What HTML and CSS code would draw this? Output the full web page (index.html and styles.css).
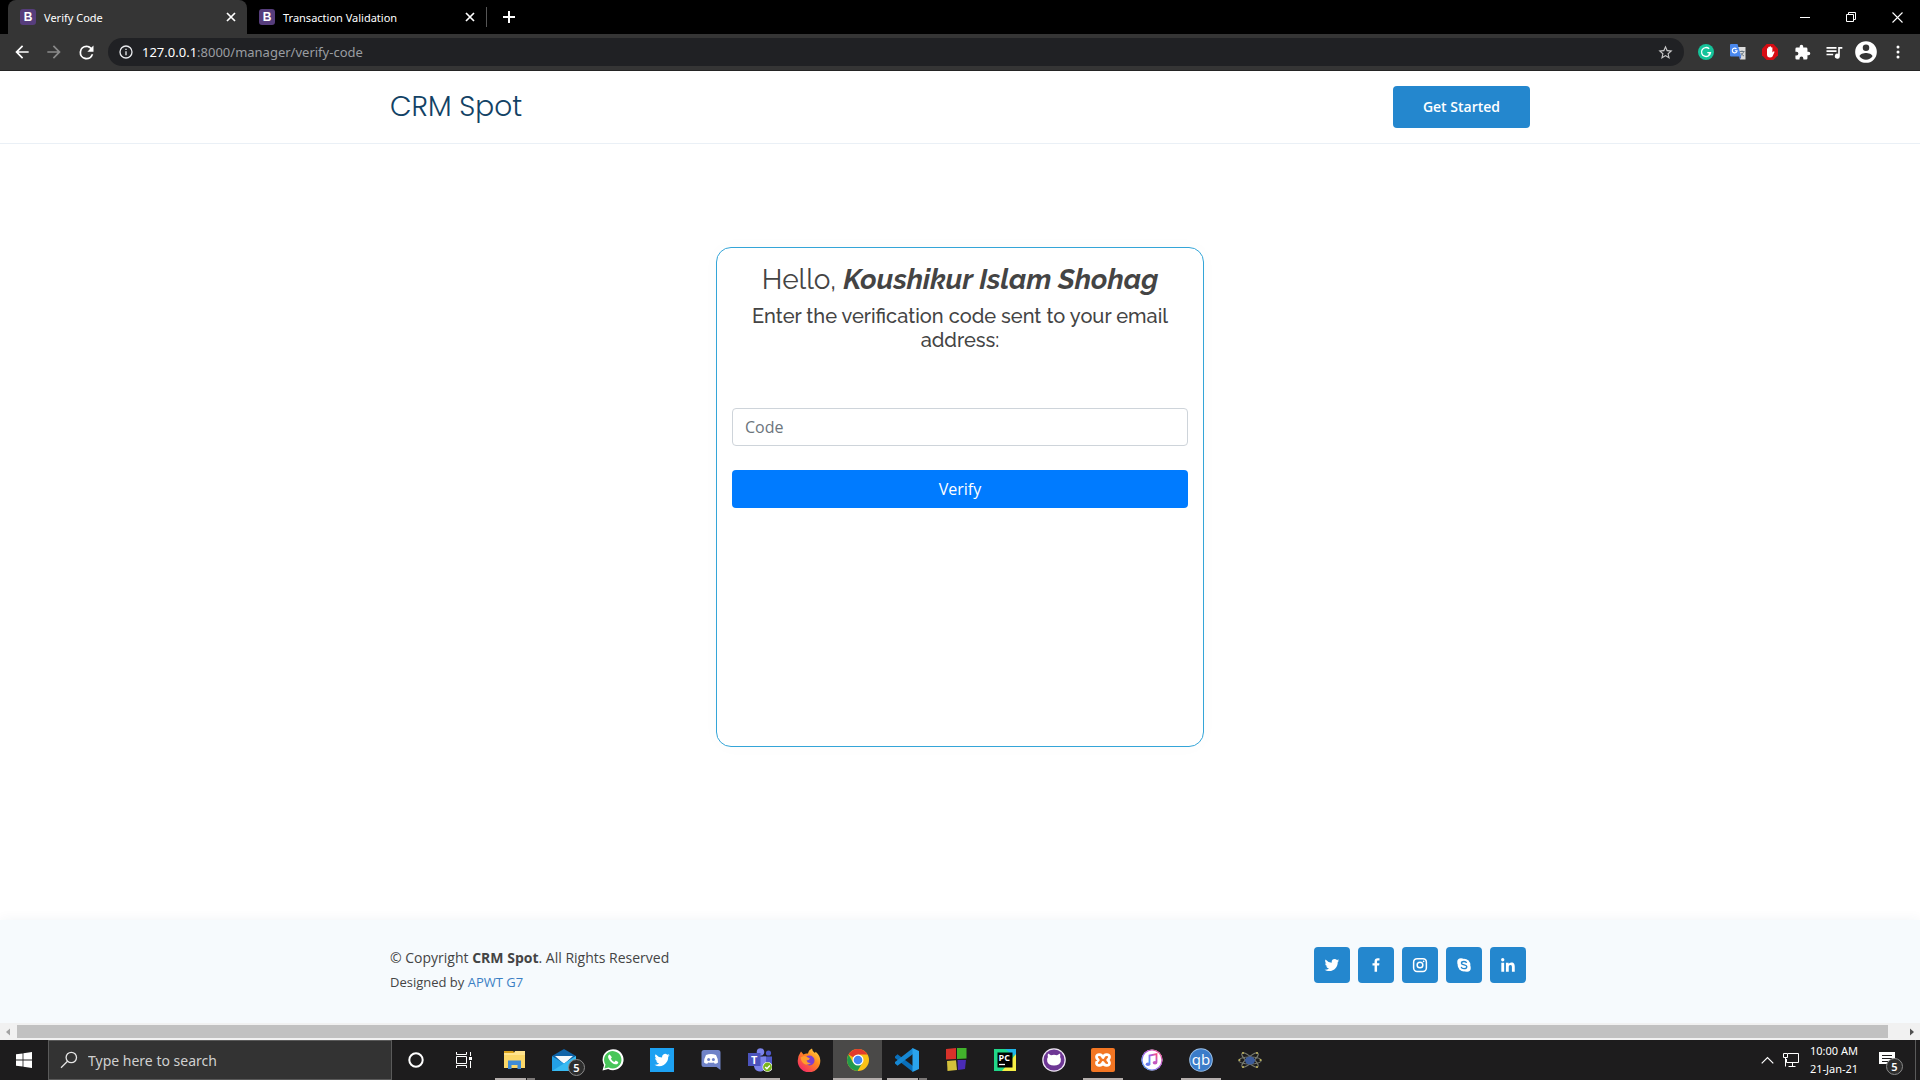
FILE: index.html
```html
<!DOCTYPE html>
<html lang="en">
<head>
<meta charset="utf-8">
<title>Verify Code</title>
<link rel="stylesheet" href="styles.css">
</head>
<body>
<div class="tabstrip">
  <div class="tab tab-active">
    <span class="favicon">B</span><span class="tab-title">Verify Code</span>
    <button class="icon-btn tab-close" aria-label="Close tab"><svg width="10" height="10" viewBox="0 0 10 10"><path d="M1 1l8 8M9 1l-8 8" stroke="#fff" stroke-width="1.7"/></svg></button>
  </div>
  <div class="tab">
    <span class="favicon">B</span><span class="tab-title">Transaction Validation</span>
    <button class="icon-btn tab-close" aria-label="Close tab"><svg width="10" height="10" viewBox="0 0 10 10"><path d="M1 1l8 8M9 1l-8 8" stroke="#fff" stroke-width="1.7"/></svg></button>
  </div>
  <span class="tab-sep"></span>
  <button class="icon-btn new-tab" aria-label="New tab"><svg width="14" height="14" viewBox="0 0 14 14"><path d="M7 1v12M1 7h12" stroke="#fff" stroke-width="2"/></svg></button>
  <div class="window-controls">
    <button class="icon-btn" aria-label="Minimize"><svg width="10" height="10" viewBox="0 0 10 10"><path d="M0 5.500h10" stroke="#fff"/></svg></button>
    <button class="icon-btn" aria-label="Restore"><svg width="10" height="10" viewBox="0 0 10 10" fill="none" stroke="#fff"><path d="M.5 2.500h7v7h-7zM2.500 2.500v-2h7v7h-2"/></svg></button>
    <button class="icon-btn" aria-label="Close"><svg width="11" height="11" viewBox="0 0 11 11"><path d="M.5.5l10 10M10.500.5l-10 10" stroke="#fff" stroke-width="1.100"/></svg></button>
  </div>
</div>

<div class="toolbar">
  <div class="nav-buttons">
    <button class="icon-btn" aria-label="Back"><svg width="20" height="20" viewBox="0 0 24 24" fill="#fff"><path d="M20 11H7.830l5.590-5.590L12 4l-8 8 8 8 1.410-1.410L7.830 13H20z"/></svg></button>
    <button class="icon-btn" aria-label="Forward"><svg width="20" height="20" viewBox="0 0 24 24" fill="#8a8a8a"><path d="M4 11h12.170l-5.590-5.590L12 4l8 8-8 8-1.410-1.410L16.170 13H4z"/></svg></button>
    <button class="icon-btn" aria-label="Reload"><svg width="21" height="21" viewBox="0 0 24 24" fill="#fff"><path d="M17.650 6.350A7.960 7.960 0 0 0 12 4a8 8 0 1 0 7.730 10h-2.080A6 6 0 1 1 12 6c1.660 0 3.140.69 4.220 1.780L13 11h7V4z"/></svg></button>
  </div>
  <div class="omnibox">
    <svg width="16" height="16" viewBox="0 0 24 24" fill="#e8eaed"><path d="M11 7h2v2h-2zm0 4h2v6h-2zm1-9a10 10 0 1 0 0 20 10 10 0 0 0 0-20zm0 18a8 8 0 1 1 0-16 8 8 0 0 1 0 16z"/></svg>
    <div class="url" role="textbox" contenteditable="true" aria-label="Address"><span class="host">127.0.0.1</span>:8000/manager/verify-code</div>
    <button class="icon-btn" aria-label="Bookmark this tab"><svg width="17" height="17" viewBox="0 0 24 24" fill="#c8c8c8"><path d="M22 9.240l-7.190-.62L12 2 9.190 8.630 2 9.240l5.460 4.730L5.820 21 12 17.270 18.180 21l-1.630-7.030zM12 15.400l-3.760 2.270 1-4.280-3.320-2.880 4.380-.38L12 6.100l1.710 4.040 4.380.38-3.320 2.880 1 4.280z"/></svg></button>
  </div>
  <div class="extensions">
    <button class="icon-btn" aria-label="Grammarly"><svg width="16" height="16" viewBox="0 0 16 16"><circle cx="8" cy="8" r="8" fill="#15c39a"/><path d="M11.200 4.800A4.500 4.500 0 1 0 12.500 8.600H9.300M10.700 10.700l1.700-2.100" fill="none" stroke="#fff" stroke-width="1.300"/></svg></button>
    <button class="icon-btn" aria-label="Google Translate"><svg width="16" height="16" viewBox="0 0 16 16"><path d="M7 3h8.500v12.500H10z" fill="#dcdcdc"/><path d="M9.500 7.500h5M12 6.500v1M13.700 7.500c-.5 2-2 3.500-3.500 4.300M10.800 9c.8 1.500 2 2.500 3.200 3" stroke="#6d7b86" fill="none"/><path d="M1 0h6.500l3.700 12.500H1a1 1 0 0 1-1-1V1a1 1 0 0 1 1-1z" fill="#4a88ee"/><path d="M9 12.500h2.200L10 15.500z" fill="#2a56c6"/><path d="M6.500 4.900A2.400 2.400 0 1 0 7.100 6.700H4.900" stroke="#fff" fill="none" stroke-width="1.100"/></svg></button>
    <button class="icon-btn" aria-label="AdBlock"><svg width="16" height="16" viewBox="0 0 16 16"><path d="M4.700 0h6.600L16 4.700v6.600L11.300 16H4.700L0 11.300V4.700z" fill="#d60c13"/><path d="M5 8V4.500q.6-.6 1.200 0V3q.7-.7 1.400 0v-.4q.7-.7 1.400 0v.9q.7-.7 1.400 0v5l1-1q.9-.4 1.100.4L10.500 12.500q-.8 1.100-2.500 1.100c-2 0-3-1.300-3-3z" fill="#fff"/></svg></button>
    <button class="icon-btn" aria-label="Extensions"><svg width="17" height="17" viewBox="0 0 24 24" fill="#fff"><path d="M20.500 11H19V7a2 2 0 0 0-2-2h-4V3.500a2.500 2.500 0 0 0-5 0V5H4a2 2 0 0 0-2 2v3.800h1.500a2.700 2.700 0 0 1 0 5.400H2V20a2 2 0 0 0 2 2h3.800v-1.500a2.700 2.700 0 0 1 5.400 0V22H17a2 2 0 0 0 2-2v-4h1.500a2.500 2.500 0 0 0 0-5z"/></svg></button>
    <button class="icon-btn" aria-label="Media"><svg width="20" height="20" viewBox="0 0 24 24" fill="#fff"><path d="M15 6H3v2h12zm0 4H3v2h12zM3 16h8v-2H3zM17 6v8.180A3 3 0 1 0 19 17V8h3V6z"/></svg></button>
    <button class="icon-btn" aria-label="Profile"><svg width="26" height="26" viewBox="0 0 24 24" fill="#fff"><path d="M12 2a10 10 0 1 0 0 20 10 10 0 0 0 0-20zm0 3a3 3 0 1 1 0 6 3 3 0 0 1 0-6zm0 14.200A7.200 7.200 0 0 1 6 15.980C6.030 13.990 10 12.900 12 12.900s5.970 1.090 6 3.080A7.200 7.200 0 0 1 12 19.200z"/></svg></button>
    <button class="icon-btn" aria-label="Menu"><svg width="4" height="14" viewBox="0 0 4 14" fill="#fff"><circle cx="2" cy="2" r="1.500"/><circle cx="2" cy="7" r="1.500"/><circle cx="2" cy="12" r="1.500"/></svg></button>
  </div>
</div>

<header class="site-header">
  <div class="container">
    <a class="logo" href="#">CRM Spot</a>
    <a class="get-started" href="#">Get Started</a>
  </div>
</header>

<main class="content">
  <form class="card">
    <h1 class="greeting">Hello, <em>Koushikur Islam Shohag</em></h1>
    <label class="prompt" for="code">Enter the verification code sent to your email address:</label>
    <input class="code" id="code" type="text" placeholder="Code">
    <button class="verify" type="button">Verify</button>
  </form>
</main>

<footer class="site-footer">
  <div class="container">
    <div>
      <p class="copyright">© Copyright <strong>CRM Spot</strong>. All Rights Reserved</p>
      <p class="credits">Designed by <a href="#">APWT G7</a></p>
    </div>
    <nav class="social">
      <a href="#" aria-label="Twitter"><svg width="18" height="18" viewBox="0 0 24 24" fill="#fff"><path d="M19.633 7.997c.013.175.013.349.013.523 0 5.325-4.053 11.461-11.460 11.461-2.282 0-4.402-.661-6.186-1.809.324.037.636.05.973.05a8.070 8.070 0 0 0 5.001-1.721 4.036 4.036 0 0 1-3.767-2.793c.249.037.499.062.761.062.361 0 .724-.05 1.061-.137a4.027 4.027 0 0 1-3.230-3.953v-.05c.537.299 1.160.486 1.820.511a4.022 4.022 0 0 1-1.796-3.354c0-.748.199-1.434.548-2.032a11.457 11.457 0 0 0 8.306 4.215c-.062-.3-.1-.611-.1-.923a4.026 4.026 0 0 1 4.028-4.028c1.160 0 2.207.486 2.943 1.272a7.957 7.957 0 0 0 2.556-.973 4.020 4.020 0 0 1-1.771 2.220 8.073 8.073 0 0 0 2.319-.624 8.645 8.645 0 0 1-2.019 2.083z"/></svg></a>
      <a href="#" aria-label="Facebook"><svg width="18" height="18" viewBox="0 0 24 24" fill="#fff"><path d="M13.397 20.997v-8.196h2.765l.411-3.209h-3.176V7.548c0-.926.258-1.560 1.587-1.560h1.684V3.127A22.336 22.336 0 0 0 14.201 3c-2.444 0-4.122 1.492-4.122 4.231v2.355H7.332v3.209h2.753v8.202z"/></svg></a>
      <a href="#" aria-label="Instagram"><svg width="18" height="18" viewBox="0 0 24 24" fill="none" stroke="#fff" stroke-width="2"><rect x="3.500" y="3.500" width="17" height="17" rx="4.500"/><circle cx="12" cy="12" r="3.800"/><circle cx="16.800" cy="7.200" r="1.100" fill="#fff" stroke="none"/></svg></a>
      <a href="#" aria-label="Skype"><svg width="18" height="18" viewBox="0 0 24 24"><circle cx="8" cy="8" r="5" fill="#fff"/><circle cx="16" cy="16" r="5" fill="#fff"/><circle cx="12" cy="12" r="8.500" fill="#fff"/><path d="M15.500 9.300C15 7.900 13.600 7.300 12 7.300c-1.900 0-3.400.8-3.400 2.300 0 3.200 7.100 1.500 7.100 4.800 0 1.600-1.700 2.500-3.700 2.500-1.900 0-3.400-.8-3.800-2.400" fill="none" stroke="#2487ce" stroke-width="1.800"/></svg></a>
      <a href="#" aria-label="LinkedIn"><svg width="18" height="18" viewBox="0 0 24 24" fill="#fff"><circle cx="4.983" cy="5.009" r="2.188"/><path d="M9.237 8.855v12.139h3.769v-6.003c0-1.584.298-3.118 2.262-3.118 1.937 0 1.961 1.811 1.961 3.218v5.904H21v-6.657c0-3.270-.704-5.783-4.526-5.783-1.835 0-3.065 1.007-3.568 1.960h-.051v-1.660zm-6.142 0H6.870v12.139H3.095z"/></svg></a>
    </nav>
  </div>
</footer>

<div class="scrollbar">
  <svg width="17" height="16" viewBox="0 0 17 16"><path d="M10 4.500v7L6 8z" fill="#a3a3a3"/></svg>
  <div class="thumb"></div>
  <svg width="17" height="16" viewBox="0 0 17 16"><path d="M7 4.500v7L11 8z" fill="#505050"/></svg>
</div>

<div class="taskbar">
  <button class="task" aria-label="Start"><svg width="16" height="16" viewBox="0 0 16 16" fill="#fff"><path d="M0 2.300L6.600 1.400v6.200H0zM7.400 1.300L16 0v7.600H7.400zM0 8.400h6.600v6.200L0 13.700zM7.400 8.400H16V16l-8.600-1.200z"/></svg></button>
  <label class="search">
    <svg width="18" height="18" viewBox="0 0 18 18" fill="none" stroke="#e6e6e6" stroke-width="1.300"><circle cx="11.300" cy="6.500" r="5.200"/><path d="M7.500 10.300L1 16.800"/></svg>
    <input type="text" placeholder="Type here to search" aria-label="Type here to search">
  </label>
  <button class="task" aria-label="Cortana"><svg width="16" height="16" viewBox="0 0 16 16"><circle cx="8" cy="8" r="6.700" fill="none" stroke="#fff" stroke-width="2"/></svg></button>
  <button class="task" aria-label="Task View"><svg width="16" height="16" viewBox="0 0 16 16" fill="none" stroke="#fff"><path d="M.5 0v2.500h10V0M.5 16v-2.500h10V16M.5 4.500h10v7H.5zM14.500 0v4M14.500 9v7"/><path d="M13 5h3v3h-3z" fill="#fff" stroke="none"/></svg></button>
  <div class="apps">
    <button class="app running multi" aria-label="File Explorer"><svg width="24" height="24" viewBox="0 0 24 24"><path d="M1 3h9l2 2H1z" fill="#d9a21b"/><path d="M1 5h21v15H1z" fill="#fbd768"/><path d="M1 5h10l1-2h10v4H1z" fill="#ffe38d"/><path d="M5 12.500h13V21h-3.500v-4h-6v4H5z" fill="#3e8bd6"/></svg></button>
    <button class="app" aria-label="Mail"><svg width="24" height="24" viewBox="0 0 24 24"><path d="M0 8l12-7 12 7-12 8z" fill="#0f63a8"/><path d="M3 8h18l-9 8z" fill="#f4f8fb"/><path d="M0 8l12 7.500L24 8v15H0z" fill="#23a0e6"/><path d="M0 23L24 8v15z" fill="#38baf2"/></svg><span class="badge mail-badge">5</span></button>
    <button class="app" aria-label="WhatsApp"><svg width="24" height="24" viewBox="0 0 24 24"><path d="M1.500 22.500L3 17A10.500 10.500 0 1 1 7.200 21z" fill="#fff"/><path d="M3.400 20.600l1.100-4A8.700 8.700 0 1 1 7.700 19.500z" fill="#49c65a"/><path d="M8.700 6.500c-.7.100-1.700 1-1.600 2.400.2 2 3.400 6.600 7.200 7.400 1.600.3 3-.7 3-2.300l-2.600-1.500-1.300 1.400c-1.600-.6-2.700-1.700-3.500-3.200l1-1.400z" fill="#fff"/></svg></button>
    <button class="app" aria-label="Twitter"><svg width="24" height="24" viewBox="0 0 24 24"><path d="M0 0h24v24H0z" fill="#1da1f2"/><path transform="translate(3 3) scale(.76)" fill="#fff" d="M22 5.500a8 8 0 0 1-2.400.7 4.100 4.100 0 0 0 1.800-2.300 8 8 0 0 1-2.600 1A4.100 4.100 0 0 0 11.900 8.600 11.600 11.600 0 0 1 3.400 4.300a4.100 4.100 0 0 0 1.300 5.500 4 4 0 0 1-1.900-.5c0 2 1.400 3.700 3.300 4.100-.6.200-1.200.2-1.900.1a4.100 4.100 0 0 0 3.900 2.800A8.200 8.200 0 0 1 2 18a11.700 11.700 0 0 0 18-10.400 8 8 0 0 0 2-2.100z"/></svg></button>
    <button class="app" aria-label="Discord"><svg width="24" height="24" viewBox="0 0 24 24"><path d="M5 2h14a2.500 2.500 0 0 1 2.500 2.500V22l-4-3H5a2.500 2.500 0 0 1-2.500-2.500v-12A2.500 2.500 0 0 1 5 2z" fill="#7083c8"/><path d="M7 7q5-1.800 10 0 2 3.500 2 7.500-1.500 1.200-3.200 1.200l-1-1.300q-2.800.7-5.600 0l-1 1.300Q6.500 15.700 5 14.500 5 10.500 7 7z" fill="#fff"/><circle cx="9.600" cy="11.500" r="1.500" fill="#7083c8"/><circle cx="14.400" cy="11.500" r="1.500" fill="#7083c8"/></svg></button>
    <button class="app running" aria-label="Microsoft Teams"><svg width="24" height="24" viewBox="0 0 24 24"><circle cx="12.500" cy="4" r="3.800" fill="#7b83eb"/><circle cx="20.500" cy="5" r="2.600" fill="#5059c9"/><path d="M15 8.500h9v7q0 4-4 4.500h-5z" fill="#5059c9"/><path d="M6 8.500h12v8a6 6 0 0 1-12 2z" fill="#7b83eb"/><path d="M0 5h12.500v13H0z" fill="#4b53bc"/><text x="6.200" y="15.500" class="glyph t-glyph" text-anchor="middle">T</text><circle cx="19.500" cy="19" r="5" fill="#fff"/><circle cx="19.500" cy="19" r="4.400" fill="#7ab51d"/><path d="M17.200 19l1.700 1.700 3-3.200" fill="none" stroke="#fff" stroke-width="1.400"/></svg></button>
    <button class="app" aria-label="Firefox"><svg width="24" height="24" viewBox="0 0 24 24"><defs><linearGradient id="ff" x1="1" y1="0" x2=".2" y2="1"><stop offset="0" stop-color="#ffe14a"/><stop offset=".45" stop-color="#ff8a1e"/><stop offset="1" stop-color="#f5246a"/></linearGradient></defs><path d="M4 3.500l2.500 3Q8.500 5 11 5.500q.5-3.500 4-5 0 2.500 3 4.500l.7-1.200Q23.500 8 23.300 13A11.300 11.300 0 0 1 .7 13Q.6 8 4 3.500z" fill="url(#ff)"/><circle cx="12.500" cy="12.500" r="5" fill="#7b3fd0"/><path d="M3.500 9.500q4-3 7.500 0l2 1q-.8 1.800-3.500 2 1 3 4.500 2.500-4.500 3.500-8 0-2-2-2.500-5.500z" fill="#ff9d2c"/></svg></button>
    <button class="app running active" aria-label="Google Chrome"><svg width="24" height="24" viewBox="0 0 24 24"><circle cx="12" cy="12" r="11" fill="#fbc116"/><path d="M12 12L2.500 6.500A11 11 0 0 1 21.500 6.500H12z" fill="#e33b2e"/><path d="M2.500 6.500A11 11 0 0 0 11.500 23l5-8.500L12 12 7.200 14.800z" fill="#229a4a"/><circle cx="12" cy="12" r="5.500" fill="#fff"/><circle cx="12" cy="12" r="4.300" fill="#4285f4"/></svg></button>
    <button class="app running multi" aria-label="Visual Studio Code"><svg width="24" height="24" viewBox="0 0 24 24"><path d="M0 8.500L2.500 6.300 18 18v6L0 10z" fill="#0a6fba"/><path d="M0 15.500L2.500 17.700 18 6V0L0 14z" fill="#1687d3"/><path d="M17.500 0L24 3v18l-6.500 3z" fill="#2aa4ee"/></svg></button>
    <button class="app" aria-label="Blocks"><svg width="24" height="24" viewBox="0 0 24 24"><path d="M2 1l10-1v11L2 11.500z" fill="#d8322a"/><path d="M13 0h9.500v10.500L13 11z" fill="#42b32c"/><path d="M3 13l9-.8L13 22l-9.500 1z" fill="#d3c03b"/><path d="M13.500 12H22l-1 9-7 1z" fill="#4a2bb5"/></svg></button>
    <button class="app" aria-label="PyCharm"><svg width="24" height="24" viewBox="0 0 24 24"><path d="M1 1h22v22H1z" fill="#21d789"/><path d="M12 1h11v8z" fill="#1fb5e8"/><path d="M23 6v17H9z" fill="#f5ee45"/><path d="M4.500 4.500h15v15h-15z" fill="#000"/><text x="5.500" y="13" class="glyph pc-glyph">PC</text><path d="M6 16.500h6" stroke="#fff" stroke-width="1.300"/></svg></button>
    <button class="app" aria-label="GitHub Desktop"><svg width="24" height="24" viewBox="0 0 24 24"><circle cx="12" cy="12" r="11.800" fill="#efe7f4"/><circle cx="12" cy="12" r="10.500" fill="#6e3795"/><path d="M6 5.500l3 1.700q3-.7 6 0l3-1.700q.6 2 .1 3.500 1.400 2 .6 4.800-1 3.700-6.700 3.700t-6.700-3.700Q4.500 11 5.900 9q-.5-1.500.1-3.500z" fill="#fff"/></svg></button>
    <button class="app running" aria-label="XAMPP"><svg width="24" height="24" viewBox="0 0 24 24"><rect width="24" height="24" rx="2" fill="#f37623"/><path d="M12 9.500C11 6 5.500 5.500 5.500 9c0 1.500 1 2.300 1.800 3-.8.700-1.800 1.500-1.800 3 0 3.500 5.500 3 6.500-.5 1 3.500 6.500 4 6.500.5 0-1.500-1-2.300-1.800-3 .8-.7 1.800-1.500 1.800-3 0-3.500-5.500-3-6.500.5z" fill="none" stroke="#fff" stroke-width="2.800" stroke-linejoin="round"/></svg></button>
    <button class="app" aria-label="iTunes"><svg width="24" height="24" viewBox="0 0 24 24"><defs><linearGradient id="it" x1="0" y1="1" x2="1" y2="0"><stop offset="0" stop-color="#3aa7f5"/><stop offset=".5" stop-color="#a45be8"/><stop offset="1" stop-color="#fa4f7d"/></linearGradient></defs><circle cx="12" cy="12" r="10.500" fill="#fff"/><circle cx="12" cy="12" r="10" fill="none" stroke="url(#it)" stroke-width="1.200"/><path d="M9.500 16V7.500l7-1.500v8.500" fill="none" stroke="url(#it)" stroke-width="1.800"/><ellipse cx="8" cy="16.200" rx="2.300" ry="1.800" fill="#6a7bea"/><ellipse cx="15" cy="14.800" rx="2.300" ry="1.800" fill="#c457c0"/></svg></button>
    <button class="app running" aria-label="qBittorrent"><svg width="24" height="24" viewBox="0 0 24 24"><circle cx="12" cy="12" r="11.800" fill="#9cc2ec"/><circle cx="12" cy="12" r="10.800" fill="#3b7cc9"/><text x="12" y="16.500" class="glyph qb-glyph" text-anchor="middle">qb</text></svg></button>
    <button class="app" aria-label="Atom"><svg width="24" height="24" viewBox="0 0 24 24"><g fill="none" stroke="#777a70"><ellipse cx="12" cy="12.500" rx="11.500" ry="3.500"/><ellipse cx="12" cy="12" rx="10.500" ry="3" transform="rotate(40 12 12)"/><ellipse cx="12" cy="12" rx="10.500" ry="3" transform="rotate(-40 12 12)"/></g><ellipse cx="12" cy="12.500" rx="5" ry="4" fill="#3c5c9c"/><g fill="#c5b95c"><circle cx="1.500" cy="12" r="1"/><circle cx="22.500" cy="12" r="1"/><circle cx="5" cy="5" r="1"/><circle cx="19" cy="5" r="1"/><circle cx="5" cy="19" r="1"/><circle cx="19" cy="19" r="1"/></g></svg></button>
  </div>
  <div class="tray">
    <button class="icon-btn" aria-label="Show hidden icons"><svg width="13" height="8" viewBox="0 0 13 8"><path d="M.7 7.300L6.500 1.500l5.800 5.800" fill="none" stroke="#fff" stroke-width="1.200"/></svg></button>
    <button class="icon-btn" aria-label="Network"><svg width="16" height="14" viewBox="0 0 16 14" fill="none" stroke="#fff"><path d="M5 .5h10.500v9H3.500V6M9.500 10v3M5.500 13.500h7M.5.500h4v4h-4zM2.500 4.500v9"/></svg></button>
    <div class="clock"><span>10:00 AM</span><span>21-Jan-21</span></div>
    <button class="icon-btn notifications" aria-label="Notifications"><svg width="16" height="16" viewBox="0 0 16 16"><path d="M0 0h16v12h-3v4l-4-4H0z" fill="#fff"/><path d="M3 3.500h10M3 6.500h10M3 9.500h6" stroke="#1d1c1d"/></svg><span class="badge note-badge">5</span></button>
    <span class="peek"></span>
  </div>
</div>
</body>
</html>
```

FILE: styles.css
```css
* { box-sizing: border-box; }
body {
  margin: 0;
  min-height: 100vh;
  display: flex;
  flex-direction: column;
  background: #fff;
  color: #444;
  font-family: "Open Sans", sans-serif;
}
button, input { font-family: inherit; }
a { text-decoration: none; }
svg { display: block; flex: none; }
p { margin: 0; }
.icon-btn {
  display: flex;
  align-items: center;
  justify-content: center;
  padding: 0;
  border: 0;
  background: none;
}

/* Browser chrome */
.tabstrip {
  display: flex;
  align-items: center;
  height: 34px;
  padding-left: 8px;
  background: #000;
}
.tab {
  display: flex;
  align-items: center;
  width: 239px;
  height: 34px;
  padding: 0 11px 0 12px;
  color: #fff;
  font: 11px "Noto Sans", sans-serif;
}
.tab-active { background: #353535; border-radius: 8px 8px 0 0; }
.favicon {
  width: 16px;
  height: 16px;
  margin-right: 8px;
  border-radius: 3px;
  background: #563d7c;
  font: bold 12px/16px "Liberation Sans", sans-serif;
  text-align: center;
}
.tab-title { flex: 1; white-space: nowrap; }
.tab-sep { width: 1px; height: 20px; background: #555; }
.new-tab { width: 44px; height: 34px; }
.window-controls { display: flex; margin-left: auto; }
.window-controls .icon-btn { width: 46px; height: 28px; }

.toolbar {
  display: flex;
  align-items: center;
  height: 37px;
  padding: 0 6px;
  background: #353535;
  border-bottom: 1px solid #242424;
}
.nav-buttons { display: flex; width: 102px; }
.nav-buttons .icon-btn { width: 32px; height: 32px; }
.omnibox {
  display: flex;
  align-items: center;
  flex: 1;
  height: 28px;
  padding: 0 10px;
  border-radius: 14px;
  background: #202124;
}
.url {
  flex: 1;
  margin-left: 8px;
  color: #9a9da1;
  font: 13px "Noto Sans", sans-serif;
}
.host { color: #fff; }
.extensions { display: flex; margin-left: 6px; }
.extensions .icon-btn { width: 32px; height: 32px; }

/* Site header */
.container {
  display: flex;
  align-items: center;
  justify-content: space-between;
  width: 100%;
  max-width: 1170px;
  margin: 0 auto;
  padding: 0 15px;
}
.site-header {
  display: flex;
  height: 73px;
  border-bottom: 1px solid #eaf0f6;
}
.logo {
  color: #124265;
  font: 300 28px "Poppins", "Inter", sans-serif;
}
.get-started {
  padding: 0 30px;
  border-radius: 4px;
  background: #2487ce;
  color: #fff;
  font-size: 14px;
  font-weight: 600;
  line-height: 42px;
}

/* Verification form */
.content {
  flex: 1;
  display: flex;
  justify-content: center;
  align-items: flex-start;
  padding: 103px 15px 40px;
}
.card {
  display: flex;
  flex-direction: column;
  width: 488px;
  min-height: 500px;
  padding: 15px;
  border: 1px solid #34a5d8;
  border-radius: 15px;
  box-shadow: 0 0 20px rgba(18, 66, 101, 0.02);
}
.greeting, .prompt {
  margin: 0 0 8px;
  font-family: "Raleway", "Lato", sans-serif;
  font-weight: 500;
  text-align: center;
}
.greeting { font-size: 28px; font-weight: 400; line-height: 33px; }
.greeting em { font-weight: 700; }
.prompt {
  margin-bottom: 56px;
  padding: 0 15px;
  font-size: 20px;
  line-height: 24px;
}
.code {
  height: 38px;
  padding: 0 12px;
  border: 1px solid #ced4da;
  border-radius: 4px;
  color: #495057;
  font-size: 16px;
}
.code::placeholder { color: #6c757d; }
.verify {
  height: 38px;
  margin-top: 24px;
  border: 0;
  border-radius: 4px;
  background: #007bff;
  color: #fff;
  font-size: 16px;
}

/* Site footer */
.site-footer {
  padding: 24px 0 31px;
  background: #f6fafd;
  box-shadow: 0 0 12px rgba(18, 66, 101, 0.06);
}
.site-footer .container { align-items: flex-start; padding-right: 19px; }
.copyright { padding: 2px 0; font-size: 14px; line-height: 24px; }
.credits { font-size: 13px; line-height: 20px; }
.credits a { color: #3b7fc4; }
.social { display: flex; gap: 8px; padding-top: 3px; }
.social a {
  display: flex;
  align-items: center;
  justify-content: center;
  width: 36px;
  height: 36px;
  border-radius: 4px;
  background: #2487ce;
}

.scrollbar {
  position: relative;
  display: flex;
  align-items: center;
  height: 17px;
  background: #f1f1f1;
}
.thumb { flex: 1; height: 13px; margin-right: 15px; background: #c1c1c1; }

/* Taskbar */
.taskbar {
  display: flex;
  height: 40px;
  background: #1d1c1d;
  color: #fff;
}
.task, .app {
  display: flex;
  align-items: center;
  justify-content: center;
  width: 48px;
  padding: 0;
  border: 0;
  background: none;
  color: #fff;
}
.search {
  display: flex;
  align-items: center;
  width: 344px;
  padding-left: 11px;
  border: 1px solid #5a5a5a;
  background: #333;
}
.search input {
  flex: 1;
  min-width: 0;
  padding: 0 0 0 10px;
  border: 0;
  background: none;
  color: #fff;
  font: 14px "Noto Sans", sans-serif;
}
.search input::placeholder { color: #d0d0d0; }
.apps { display: flex; margin-left: 2px; }
.app { position: relative; width: 49px; }
.active { background: #4a4948; }
.running::after {
  content: "";
  position: absolute;
  right: 4px;
  bottom: 0;
  left: 5px;
  height: 2px;
  background: #b4aeac;
}
.active::after { right: 0; left: 0; }
.multi::after { background: linear-gradient(90deg, #b4aeac 31px, #1d1c1d 31px, #1d1c1d 32px, #7c7877 32px); }
.glyph { fill: #fff; font-family: "Open Sans", sans-serif; }
.t-glyph { font-size: 11px; font-weight: 700; }
.pc-glyph { font-size: 9px; font-weight: 700; }
.qb-glyph { font-size: 15px; }
.badge {
  position: absolute;
  width: 17px;
  height: 17px;
  border: 1px solid #8a8a8a;
  border-radius: 50%;
  background: #2d2d2d;
  color: #fff;
  font: 600 11px/15px "Noto Sans", sans-serif;
  text-align: center;
}
.mail-badge { top: 19px; left: 29px; }
.tray { display: flex; align-items: center; margin-left: auto; }
.tray > .icon-btn { width: 24px; height: 40px; }
.clock {
  display: flex;
  flex-direction: column;
  width: 62px;
  font: 11px/18px "Noto Sans", sans-serif;
  text-align: center;
  white-space: nowrap;
}
.tray > .notifications { position: relative; width: 44px; }
.note-badge { top: 18px; left: 21px; }
.peek { width: 5px; height: 40px; margin-left: 6px; border-left: 1px solid #5a5a5a; }
```
